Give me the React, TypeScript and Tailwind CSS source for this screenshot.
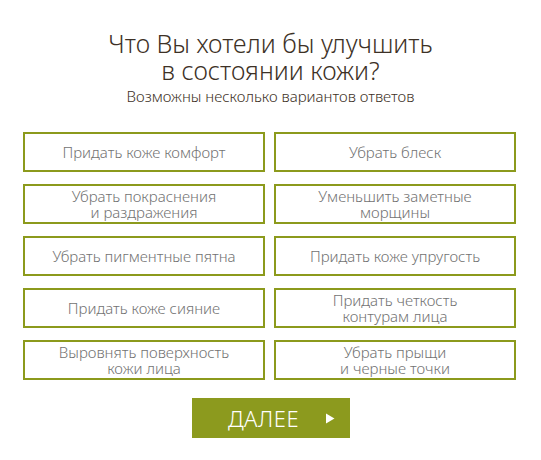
const options = [
  ['Придать коже комфорт'],
  ['Убрать блеск'],
  ['Убрать покраснения', 'и раздражения'],
  ['Уменьшить заметные', 'морщины'],
  ['Убрать пигментные пятна'],
  ['Придать коже упругость'],
  ['Придать коже сияние'],
  ['Придать четкость', 'контурам лица'],
  ['Выровнять поверхность', 'кожи лица'],
  ['Убрать прыщи', 'и черные точки'],
];

export default function App() {
  return (
    <div className="w-[541px] h-[460px] bg-white font-['Noto_Sans',sans-serif] flex flex-col items-center pt-[30px]">
      <h1 className="text-center text-[25px] leading-[27px] font-light text-[#3d3126]">
        Что Вы хотели бы улучшить
        <br />в состоянии кожи?
      </h1>
      <p className="mt-[3px] text-[15px] leading-[18px] text-[#3d3126] font-light">
        Возможны несколько вариантов ответов
      </p>
      <div className="mt-[27px] grid grid-cols-[242px_242px] gap-x-[9px] gap-y-[12px] mr-[2px]">
        {options.map((lines, i) => (
          <button
            key={i}
            className="h-[40px] border-2 border-[#8c9a1c] bg-white flex flex-col items-center justify-center text-[15px] leading-[16px] text-[#727272] font-light"
          >
            {lines.map((l, j) => (
              <span key={j}>{l}</span>
            ))}
          </button>
        ))}
      </div>
      <button className="mt-[18px] w-[158px] h-[40px] bg-[#8c9a1e] text-white flex items-center justify-center gap-[26px] pl-[22px]">
        <span className="text-[22px] tracking-[0.5px] font-light">ДАЛЕЕ</span>
        <svg width="10" height="11" viewBox="0 0 10 11">
          <path d="M1 0.5 L9.5 5.5 L1 10.5 Z" fill="white" />
        </svg>
      </button>
    </div>
  );
}
